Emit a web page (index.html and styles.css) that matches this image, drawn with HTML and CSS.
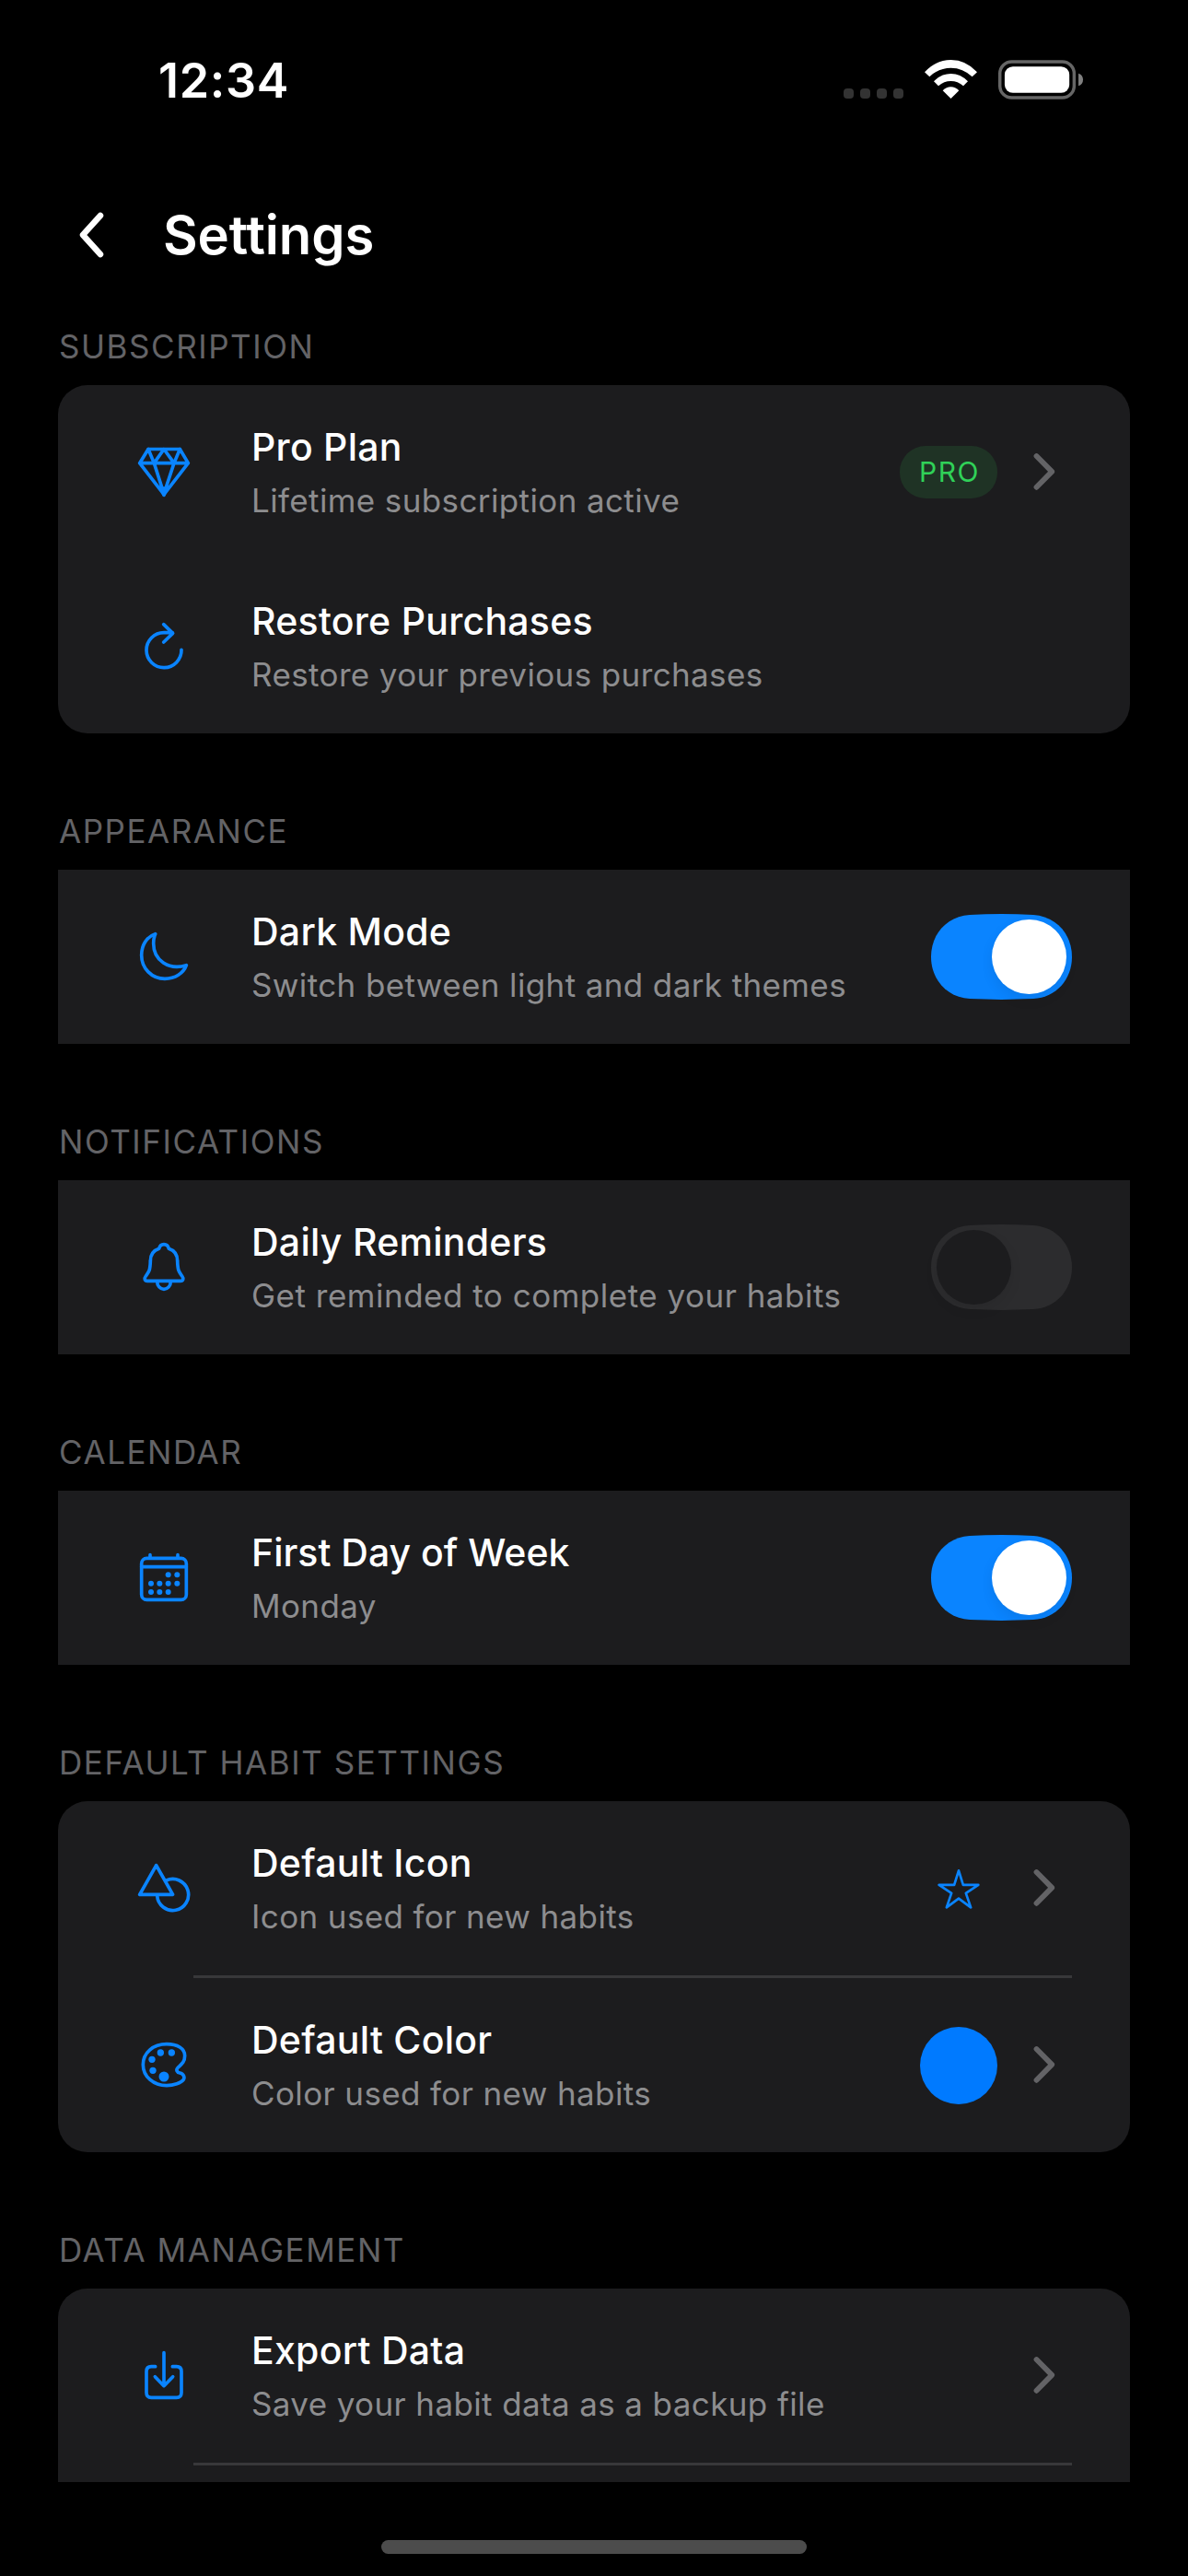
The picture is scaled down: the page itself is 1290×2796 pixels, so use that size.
FILE: index.html
```html
<!DOCTYPE html>
<html lang="en">
<head>
<meta charset="utf-8">
<title>Settings</title>
<link rel="stylesheet" href="styles.css">
</head>
<body>
<svg class="defs" aria-hidden="true">
  <symbol id="chevron" viewBox="0 0 60 60"><path d="M21.500 12 L38.200 28.900 L21.500 45.800"/></symbol>
  <symbol id="track" viewBox="0 0 153 93"><path d="M0 46.500 C0 22 17 2.500 42 .9 Q76.500 -.7 111 .9 C136 2.500 153 22 153 46.500 C153 71 136 90.500 111 92.100 Q76.500 93.700 42 92.100 C17 90.500 0 71 0 46.500Z"/></symbol>
</svg>
<div class="screen">
  <div class="status-bar">
    <span class="time">12:34</span>
    <div class="indicators">
      <div class="signal"><i></i><i></i><i></i><i></i></div>
      <svg class="wifi" viewBox="0 0 171 126"><path d="M0 40 Q36 0 85.500 0 Q135 0 171 40 L155 55 Q125 26 85.500 26 Q46 26 16 55Z"/><path d="M30 70 Q54 45 85.500 45 Q117 45 141 70 L126 85 Q108 69 85.500 69 Q63 69 45 85Z"/><path d="M59 100 Q71 88 85.500 88 Q100 88 112 100 L85.500 126Z"/></svg>
      <svg class="battery" viewBox="0 0 94 44"><rect x="1.750" y="1.750" width="81.500" height="39.500" rx="13" fill="none" stroke="#666" stroke-width="3.500"/><rect x="7" y="7" width="71" height="29" rx="9" fill="#fff"/><path d="M88 14.700 Q93 16.500 93 21.500 Q93 26.500 88 28.300Z" fill="#808080"/></svg>
    </div>
  </div>

  <header class="header">
    <svg class="back" viewBox="0 0 36 60"><path d="M28 9 L9 30 L28 51"/></svg>
    <h1>Settings</h1>
  </header>

  <main class="content">
    <section>
      <h2>SUBSCRIPTION</h2>
      <div class="card rounded">
        <div class="row">
          <svg class="icon" viewBox="36 81 213 213"><path d="M93 112.500 H196 L223 158 L144 260 L65 158Z M65 158 H223 M93 112.500 L112 158 L144 112.500 L177 158 L196 112.500 M112 158 L144 258 L177 158"/><path d="M136 240 H152 L144 262Z"/></svg>
          <div class="text"><div class="title">Pro Plan</div><div class="sub">Lifetime subscription active</div></div>
          <span class="badge">PRO</span>
          <svg class="chevron"><use href="#chevron"/></svg>
        </div>
        <div class="row">
          <svg class="icon" viewBox="36 648 213 213"><path d="M201 766 A57 57 0 1 1 144 710 H172 M143 683 L173 712 L143 741"/></svg>
          <div class="text"><div class="title">Restore Purchases</div><div class="sub">Restore your previous purchases</div></div>
        </div>
      </div>
    </section>

    <section>
      <h2>APPEARANCE</h2>
      <div class="card">
        <div class="row">
          <svg class="icon" viewBox="36 69 213 213"><path d="M116 101 C88 110 71 138 71 170 C71 213 104 247 147 247 C180 247 208 229 217 203 C160 221 110 187 110 132 C110 120 112 110 116 101Z"/></svg>
          <div class="text"><div class="title">Dark Mode</div><div class="sub">Switch between light and dark themes</div></div>
          <div class="switch on"><svg class="track"><use href="#track"/></svg><span class="knob"></span></div>
        </div>
      </div>
    </section>

    <section>
      <h2>NOTIFICATIONS</h2>
      <div class="card">
        <div class="row">
          <svg class="icon" viewBox="36 30 213 213"><path d="M144 62 C135 62 130 68 128 76 C107 83 100 98 100 116 C99 148 95 152 85 165 C79 173 81 181 90 181 H198 C207 181 209 173 203 165 C193 152 189 148 188 116 C188 98 181 83 160 76 C158 68 153 62 144 62Z M122 183 A22 25 0 0 0 166 183"/></svg>
          <div class="text"><div class="title">Daily Reminders</div><div class="sub wide">Get reminded to complete your habits</div></div>
          <div class="switch"><svg class="track"><use href="#track"/></svg><span class="knob"></span></div>
        </div>
      </div>
    </section>

    <section>
      <h2>CALENDAR</h2>
      <div class="card">
        <div class="row">
          <svg class="icon" viewBox="36 1041 213 213"><rect x="71" y="1084" width="146" height="135" rx="17"/><path d="M71 1112 H217 M99 1073 V1082 M189 1073 V1082"/><g class="dots"><circle cx="158" cy="1138" r="9"/><circle cx="187" cy="1138" r="9"/><circle cx="102" cy="1166" r="9"/><circle cx="130" cy="1166" r="9"/><circle cx="158" cy="1166" r="9"/><circle cx="187" cy="1166" r="9"/><circle cx="102" cy="1194" r="9"/><circle cx="130" cy="1194" r="9"/><circle cx="158" cy="1194" r="9"/></g></svg>
          <div class="text"><div class="title tight">First Day of Week</div><div class="sub">Monday</div></div>
          <div class="switch on"><svg class="track"><use href="#track"/></svg><span class="knob"></span></div>
        </div>
      </div>
    </section>

    <section>
      <h2>DEFAULT HABIT SETTINGS</h2>
      <div class="card rounded">
        <div class="row">
          <svg class="icon" viewBox="36 72 213 213"><path d="M119 104 L65 199 H173Z M152 153 A51 51 0 1 1 122 203"/></svg>
          <div class="text"><div class="title">Default Icon</div><div class="sub">Icon used for new habits</div></div>
          <svg class="star" viewBox="57 53 252 252"><path d="M183 120 L197.500 166.500 H247 L206.500 193.500 L222.500 240 L183 211 L143.500 240 L159.500 193.500 L119 166.500 H168.500Z"/></svg>
          <svg class="chevron"><use href="#chevron"/></svg>
        </div>
        <div class="divider"></div>
        <div class="row">
          <svg class="icon" viewBox="36 648 213 213"><path d="M153 686 C108 686 76 715 76 753 C76 792 110 821 153 821 C176 821 200 812 207 803 C213 795 209 783 196 780 C186 778 182 770 190 762 C202 751 212 744 212 724 C212 700 188 686 153 686Z"/><g class="dots"><circle cx="133" cy="714" r="11"/><circle cx="169" cy="714" r="11"/><circle cx="105" cy="736" r="11"/><circle cx="108" cy="772" r="11"/><circle cx="144" cy="792" r="16.500"/></g></svg>
          <div class="text"><div class="title">Default Color</div><div class="sub">Color used for new habits</div></div>
          <span class="swatch"></span>
          <svg class="chevron"><use href="#chevron"/></svg>
        </div>
      </div>
    </section>

    <section>
      <h2>DATA MANAGEMENT</h2>
      <div class="card rounded">
        <div class="row">
          <svg class="icon" viewBox="36 69 213 213"><path d="M116 146 H103 Q87 146 87 162 V231 Q87 247 103 247 H185 Q201 247 201 231 V162 Q201 146 185 146 H172 M144 101 V208 M115 179 L144 209 L173 179"/></svg>
          <div class="text"><div class="title">Export Data</div><div class="sub">Save your habit data as a backup file</div></div>
          <svg class="chevron"><use href="#chevron"/></svg>
        </div>
        <div class="divider"></div>
        <div class="row"></div>
      </div>
    </section>
  </main>

  <footer class="home"><span class="home-indicator"></span></footer>
</div>
</body>
</html>
```

FILE: styles.css
```css
* { box-sizing: border-box; }

body {
  margin: 0;
  background: #000;
  color: #fff;
  font-family: "Inter", "Liberation Sans", sans-serif;
}

svg { display: block; flex: none; }

.defs { width: 0; height: 0; position: absolute; }

.screen {
  width: 1290px;
  height: 2796px;
  display: flex;
  flex-direction: column;
  overflow: hidden;
}

/* Status bar */
.status-bar {
  height: 177px;
  flex: none;
  padding: 58px 113px 0 172px;
  display: flex;
  justify-content: space-between;
  align-items: flex-start;
}

.time {
  font-size: 52px;
  line-height: 60px;
  font-weight: 600;
  letter-spacing: 0.7px;
}

.indicators { display: flex; padding-top: 7px; }

.signal { display: flex; gap: 7px; padding-top: 31px; margin-right: 23px; }
.signal i { width: 11px; height: 11px; border-radius: 4px; background: #333; }

.wifi { width: 57px; height: 42px; margin-right: 23px; fill: #fff; }
.battery { width: 93px; height: 44px; }

/* Header */
.header {
  height: 156px;
  flex: none;
  padding-left: 81px;
  display: flex;
  align-items: center;
}

.back {
  width: 36px;
  height: 60px;
  margin-right: 60px;
  fill: none;
  stroke: #fff;
  stroke-width: 6.5;
  stroke-linecap: round;
  stroke-linejoin: round;
}

h1 {
  margin: 0;
  font-size: 58px;
  line-height: 70px;
  font-weight: 600;
  letter-spacing: -0.1px;
}

/* Scrolling list */
.content {
  height: 2361px;
  flex: none;
  padding: 22px 63px 0;
  display: flex;
  flex-direction: column;
  gap: 85px;
  overflow: hidden;
}

section { flex: none; }

h2 {
  margin: 0 0 21px;
  padding-left: 1px;
  font-size: 35px;
  line-height: 42px;
  font-weight: 400;
  letter-spacing: 1.55px;
  color: #636366;
}

.card { background: #1c1c1e; }
.card.rounded { border-radius: 32px; }

.row {
  height: 189px;
  padding: 0 63px 0 79px;
  display: flex;
  align-items: center;
}

.icon {
  width: 71px;
  height: 71px;
  margin-right: 60px;
  fill: none;
  stroke: #0a84ff;
  stroke-width: 11;
  stroke-linecap: round;
  stroke-linejoin: round;
}

.dots { fill: #0a84ff; stroke: none; }

.text {
  flex: 1;
  padding-top: 1px;
  display: flex;
  flex-direction: column;
  gap: 10px;
  white-space: nowrap;
}

.title {
  font-size: 41px;
  line-height: 50px;
  font-weight: 500;
  letter-spacing: 0.26px;
}
.title.tight { letter-spacing: 0; }

.sub {
  font-size: 35px;
  line-height: 46px;
  letter-spacing: 0.38px;
  color: #8d8d8f;
}
.sub.wide { letter-spacing: 0.5px; }

.badge {
  width: 106px;
  height: 57px;
  margin-right: 21px;
  padding-left: 2px;
  border-radius: 28px;
  background: #1f3325;
  color: #30d158;
  font-size: 30px;
  line-height: 57px;
  font-weight: 400;
  letter-spacing: 1.5px;
  text-align: center;
}

.chevron {
  width: 60px;
  height: 60px;
  fill: none;
  stroke: #636366;
  stroke-width: 5.8;
  stroke-linecap: round;
  stroke-linejoin: round;
}

.star {
  width: 84px;
  height: 84px;
  margin-right: 21px;
  fill: none;
  stroke: #0a84ff;
  stroke-width: 8;
  stroke-linejoin: round;
}

.swatch {
  width: 84px;
  height: 84px;
  margin-right: 21px;
  border-radius: 50%;
  background: #007aff;
}

.divider {
  height: 3px;
  margin: 0 63px 0 147px;
  background: #38383a;
}

/* Switch */
.switch {
  width: 153px;
  height: 93px;
  display: grid;
  align-items: center;
}
.switch > * { grid-area: 1 / 1; }

.track { width: 153px; height: 93px; fill: #2c2c2e; }

.knob {
  width: 81px;
  height: 81px;
  margin: 0 6px;
  border-radius: 50%;
  background: #1c1c1e;
  box-shadow: 0 6px 14px rgba(0, 0, 0, 0.08);
}

.switch.on .track { fill: #0a84ff; }
.switch.on .knob { justify-self: end; background: #fff; }

/* Home indicator */
.home {
  flex: 1;
  padding-bottom: 24px;
  display: flex;
  align-items: flex-end;
  justify-content: center;
}

.home-indicator {
  width: 462px;
  height: 15px;
  border-radius: 8px;
  background: #4c4c4c;
}
```
